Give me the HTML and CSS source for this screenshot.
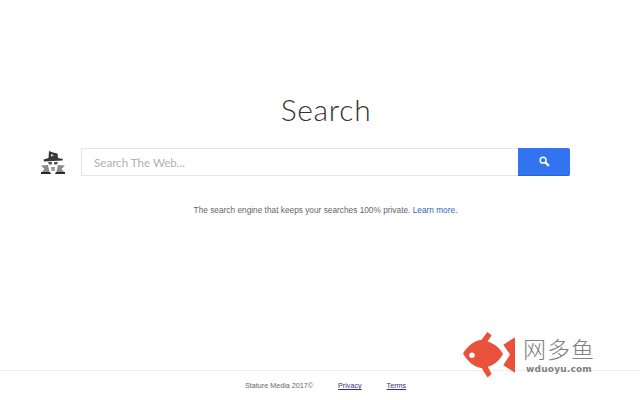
FILE: index.html
```html
<!DOCTYPE html>
<html lang="en">
<head>
<meta charset="utf-8">
<title>Search</title>
<link rel="stylesheet" href="styles.css">
</head>
<body>
<main class="main">
  <h1 class="title">Search</h1>
  <form class="search-row">
    <svg class="spy" width="26" height="26" viewBox="0 0 26 26" aria-hidden="true">
      <path fill="#3a3a3a" d="M9 2 L13 3.500 L17.500 4.500 L18 9 L23 10 L22.500 11.500 L4 12.500 L3.500 10.500 L8.500 9 Z"/>
      <path fill="#e8e8e8" d="M11 5 L14 6.500 L11 7.500 Z"/>
      <path fill="#555" d="M8 13 H12 V15.500 H9 Z"/>
      <path fill="#555" d="M14 13 H18 L17 15.500 H14 Z"/>
      <path fill="#8a8a8a" d="M1 16.500 L8 16 L9.500 23 L2 23 L4.500 20 Z"/>
      <path fill="#8a8a8a" d="M25 16.500 L18 16 L16.500 23 L24 23 L21.500 20 Z"/>
      <path fill="#999" d="M11 18 H15 L14.500 22 H11.500 Z"/>
      <path fill="#2a2a2a" d="M1 23 H10 L11 25 H1 Z"/>
      <path fill="#2a2a2a" d="M16 23 H25 V25 H15 Z"/>
    </svg>
    <input class="search-input" type="text" placeholder="Search The Web...">
    <button class="search-button" type="button" aria-label="Search">
      <svg width="11" height="11" viewBox="0 0 12 12" aria-hidden="true">
        <circle cx="4.500" cy="4.500" r="3.200" fill="none" stroke="#fff" stroke-width="1.600"/>
        <path d="M7 7 L10.800 10.800" stroke="#fff" stroke-width="2.400"/>
      </svg>
    </button>
  </form>
  <p class="tagline">The search engine that keeps your searches 100% private. <a class="learn" href="#">Learn more.</a></p>
</main>
<footer class="footer">
  <span class="copy">Stature Media 2017©</span>
  <a class="foot-link" href="#">Privacy</a>
  <a class="foot-link" href="#">Terms</a>
</footer>
<div class="watermark">
  <svg class="fish" width="54" height="47" viewBox="0 0 54 47" aria-hidden="true">
    <path fill="#e8523a" d="M0 21.500 C5 13 12 8.500 18.700 7.700 L24.300 0 L28.700 3.300 L24.500 9.500 C31 11.500 36.500 15.500 40 22 C36.500 28.500 31 33 24.800 34.800 L28.700 42 L24.500 45.500 L18.700 36 C11 35 5 30 0 21.500 Z"/>
    <path fill="#e8523a" d="M52 5.300 V40.700 L40.300 33.300 L47 22.500 L40.300 12.700 Z"/>
    <circle cx="9" cy="23.300" r="2.700" fill="#fff"/>
  </svg>
  <div class="wm-text">
    <span class="wm-cn">网多鱼</span>
    <span class="wm-en">wduoyu.com</span>
  </div>
</div>
</body>
</html>
```

FILE: styles.css
```css
html, body {
  margin: 0;
  height: 100%;
}
body {
  position: relative;
  width: 640px;
  height: 400px;
  overflow: hidden;
  background: #fff;
  font-family: "Liberation Sans", Arial, sans-serif;
  display: flex;
  flex-direction: column;
}
.main {
  flex: 1;
  padding-top: 91px;
  box-sizing: border-box;
}
.title {
  margin: 0 0 0 12px;
  text-align: center;
  font-family: Lato, sans-serif;
  font-weight: 300;
  font-size: 30px;
  line-height: 36px;
  color: #333;
  letter-spacing: 0.7px;
}
.search-row {
  display: flex;
  align-items: center;
  margin: 21px 0 0 40px;
  height: 28px;
}
.spy {
  flex: none;
  margin-right: 15px;
}
.search-input {
  width: 437px;
  height: 28px;
  box-sizing: border-box;
  border: 1px solid #e4e4e4;
  border-right: 0;
  padding: 0 12px;
  margin: 0;
  font-family: Lato, sans-serif;
  font-size: 11.600px;
  color: #555;
  outline: none;
  background: #fff;
}
.search-input::placeholder {
  color: #b0b0b0;
  opacity: 1;
}
.search-button {
  width: 52px;
  height: 28px;
  border: 0;
  border-bottom: 1px solid #2a62d0;
  padding: 0;
  margin: 0;
  background: #3273f0;
  border-radius: 0 2px 2px 0;
  display: flex;
  align-items: center;
  justify-content: center;
}
.tagline {
  margin: 28px 0 0 11px;
  text-align: center;
  font-size: 8.300px;
  line-height: 12px;
  color: #666;
}
.learn {
  color: #2a66b8;
  text-decoration: none;
}
.footer {
  height: 29px;
  border-top: 1px solid #eee;
  display: flex;
  align-items: center;
  padding-left: 245px;
  font-size: 7.200px;
  color: #666;
}
.copy {
  margin-right: 25px;
}
.foot-link {
  color: #3b2f7a;
  margin-right: 25px;
}
.watermark {
  position: absolute;
  left: 463px;
  top: 332px;
  display: flex;
  gap: 6px;
}
.wm-text {
  display: flex;
  flex-direction: column;
  align-items: flex-start;
  color: #808080;
}
.wm-cn {
  font-family: "Noto Sans CJK SC", sans-serif;
  font-weight: 300;
  font-size: 23px;
  line-height: 26px;
  margin-top: 3px;
  letter-spacing: 1px;
}
.wm-en {
  font-family: "DejaVu Sans", sans-serif;
  font-size: 9px;
  line-height: 11px;
  font-weight: 700;
  letter-spacing: 0.2px;
  margin: 3px 0 0 3px;
}
```
